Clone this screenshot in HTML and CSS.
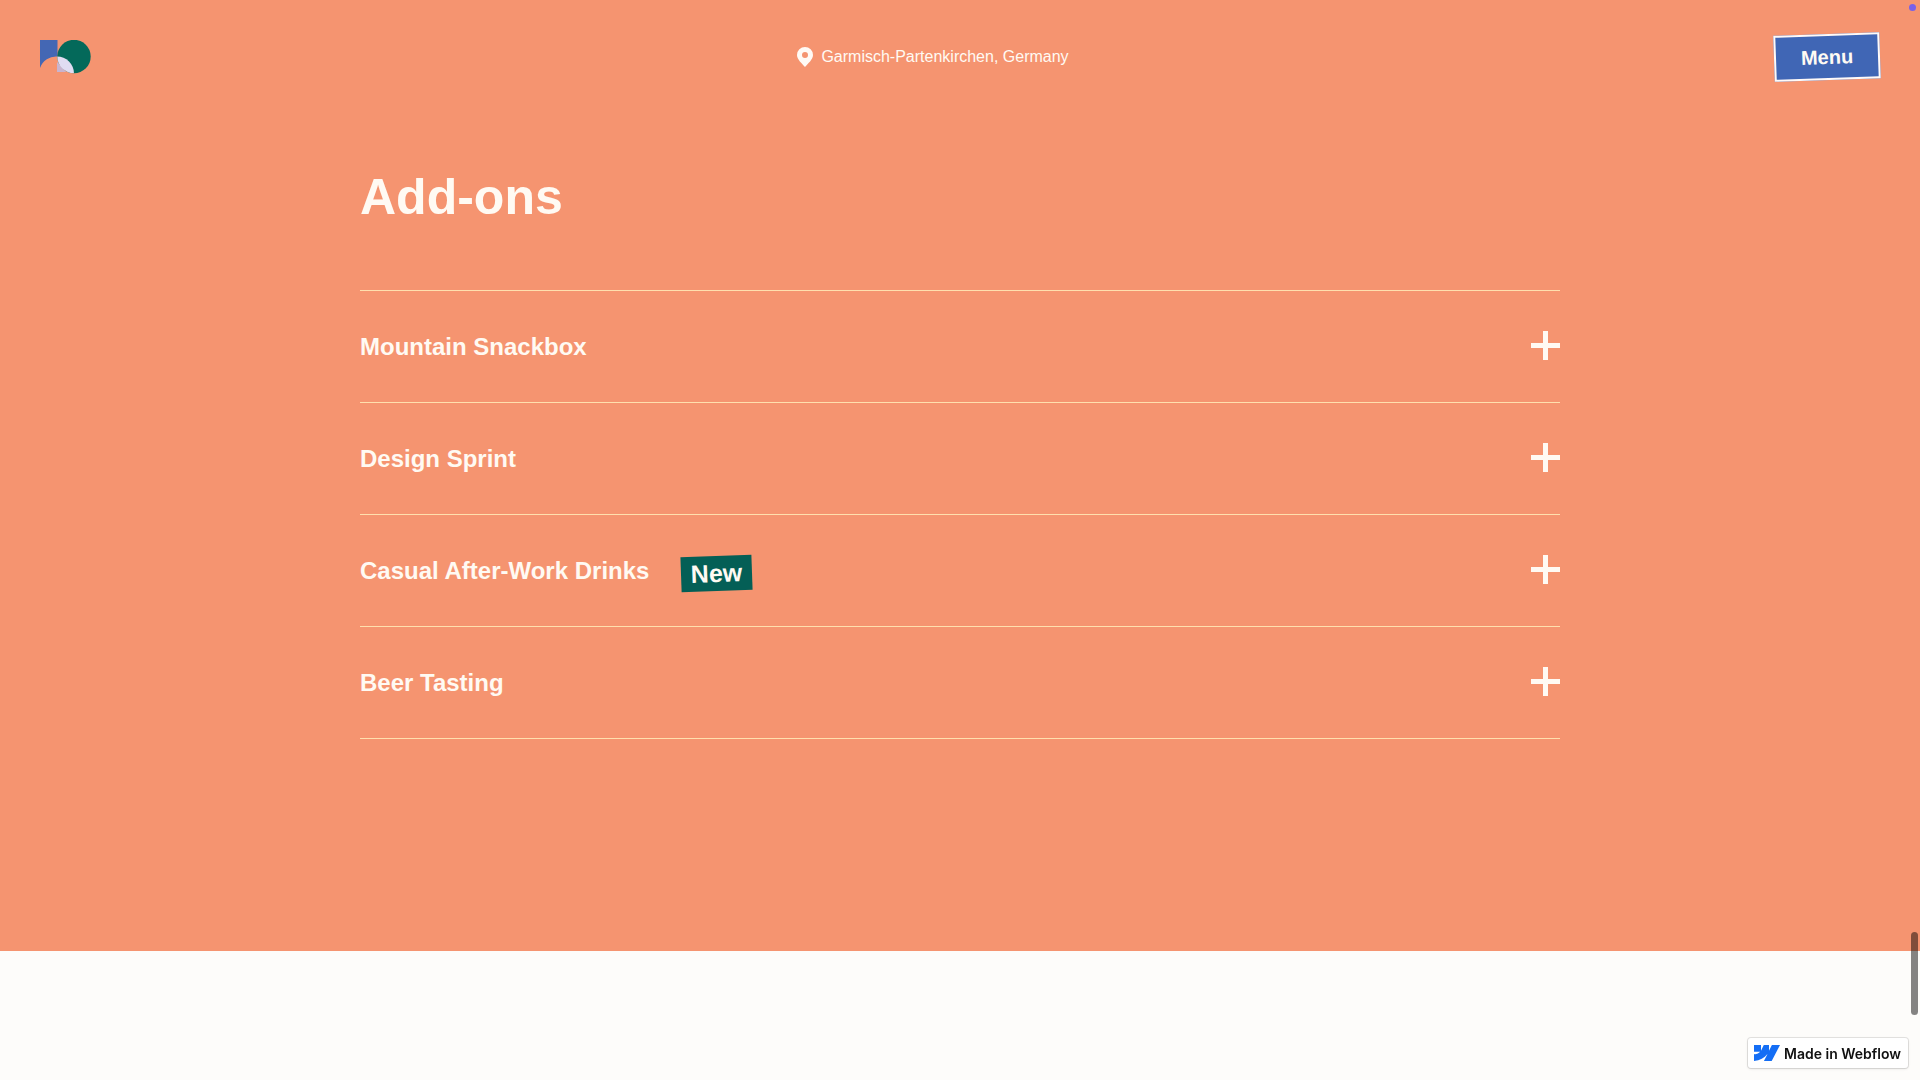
FILE: index.html
```html
<!DOCTYPE html>
<html lang="en">
<head>
  <meta charset="utf-8">
  <meta name="viewport" content="width=device-width, initial-scale=1">
  <title>Add-ons</title>
  <link rel="stylesheet" href="styles.css">
</head>
<body>
  <div class="page">
    <div class="coral">
      <header class="header">
        <a class="logo" href="#" aria-label="Home">
          <svg width="52" height="34" viewBox="0 0 52 34">
            <defs><clipPath id="circle"><circle cx="34" cy="16.5" r="16.7"/></clipPath></defs>
            <path fill="#4467b4" d="M0 0H17.500V16.500A17 17 0 0 0 0 28Z"/>
            <circle cx="34" cy="16.500" r="16.700" fill="#04695a"/>
            <path fill="#c9b4cf" d="M17 22 26 32H17Z"/>
            <path clip-path="url(#circle)" fill="#e1dcf2" d="M17 16.500A17 17 0 0 1 34 33.500H17Z"/>
          </svg>
        </a>
        <p class="location">
          <svg width="16" height="20" viewBox="0 0 16 20"><path fill="#fffaf5" fill-rule="evenodd" d="M8 0a8 8 0 0 1 8 8c0 4.500-5 8.500-8 12C5 16.500 0 12.500 0 8a8 8 0 0 1 8-8Zm0 5a3 3 0 1 0 0 6 3 3 0 0 0 0-6Z"/></svg>
          <span>Garmisch-Partenkirchen, Germany</span>
        </p>
        <button class="menu" type="button">Menu</button>
      </header>
      <main class="addons">
        <h1 class="title">Add-ons</h1>
        <ul class="list">
          <li class="item"><button class="toggle" type="button" aria-expanded="false"><span>Mountain Snackbox</span><span class="plus"></span></button></li>
          <li class="item"><button class="toggle" type="button" aria-expanded="false"><span>Design Sprint</span><span class="plus"></span></button></li>
          <li class="item"><button class="toggle" type="button" aria-expanded="false"><span>Casual After-Work Drinks</span><span class="new">New</span><span class="plus"></span></button></li>
          <li class="item"><button class="toggle" type="button" aria-expanded="false"><span>Beer Tasting</span><span class="plus"></span></button></li>
        </ul>
      </main>
    </div>
  </div>
  <span class="dot"></span>
  <span class="scroll-thumb"></span>
  <a class="webflow" href="#">
    <svg width="26" height="16" viewBox="0 0 26 16"><path fill="#146ef5" d="M26 0 17.700 16H9.900L13.400 9.300H13.200C10.400 13 6.100 15.400 0 16V9.400S3.900 9.200 6.200 6.800H0V0H7V5.700L9.800 0H15V5.700L17.900 0Z"/></svg>
    <span>Made in Webflow</span>
  </a>
</body>
</html>
```
FILE: styles.css
```css
* {
  box-sizing: border-box;
}

body {
  margin: 0;
  background: #fdfcfa;
  color: #fffaf3;
  font-family: "Liberation Sans", Arial, sans-serif;
}

button {
  font-family: inherit;
  color: inherit;
  cursor: pointer;
}

.page {
  min-height: 100vh;
}

.coral {
  background: #f59470;
  padding-bottom: 212px;
}

.header {
  display: grid;
  grid-template-columns: 1fr auto 1fr;
  align-items: center;
  height: 114px;
  padding: 0 40px;
}

.logo svg,
.location svg {
  display: block;
}

.logo {
  justify-self: start;
}

.location {
  display: flex;
  align-items: center;
  gap: 8px;
  margin: 0;
  padding-right: 54px;
  font-size: 16px;
  line-height: 20px;
}

.menu {
  justify-self: end;
  width: 106px;
  height: 46px;
  padding: 0;
  border: 2px solid #fffaf8;
  background: #4066b5;
  font-size: 20px;
  font-weight: 700;
  transform: rotate(-2deg);
}

.addons {
  width: 1200px;
  max-width: calc(100% - 80px);
  margin: 0 auto;
  padding-top: 53px;
}

.title {
  margin: 0 0 63px;
  font-size: 50px;
  line-height: 60px;
}

.list {
  margin: 0;
  padding: 0;
  list-style: none;
  border-top: 1px solid #ffdfae;
}

.item {
  border-bottom: 1px solid #ffdfae;
}

.toggle {
  display: flex;
  align-items: center;
  gap: 32px;
  width: 100%;
  height: 111px;
  padding: 0;
  border: 0;
  background: none;
  font-size: 24px;
  font-weight: 700;
  line-height: 32px;
  text-align: left;
}

.new {
  width: 71px;
  margin-top: 5px;
  background: #045f56;
  font-size: 25px;
  line-height: 35px;
  text-align: center;
  transform: rotate(-2deg);
}

.plus {
  width: 29px;
  height: 29px;
  margin: 0 0 2px auto;
  background:
    linear-gradient(#fffaf3, #fffaf3) center / 29px 5px no-repeat,
    linear-gradient(#fffaf3, #fffaf3) center / 5px 29px no-repeat;
}

.dot {
  position: fixed;
  top: 4px;
  right: 4px;
  width: 7px;
  height: 7px;
  border-radius: 50%;
  background: #7960e8;
}

.scroll-thumb {
  position: fixed;
  top: 932px;
  right: 2px;
  width: 7px;
  height: 83px;
  border-radius: 4px;
  background: rgba(0, 0, 0, 0.48);
}

.webflow {
  position: fixed;
  right: 12px;
  bottom: 12px;
  display: flex;
  align-items: center;
  gap: 4px;
  height: 30px;
  padding: 0 7px 0 6px;
  border-radius: 3px;
  background: #fff;
  box-shadow: 0 0 0 1px rgba(0, 0, 0, 0.1), 0 1px 3px rgba(0, 0, 0, 0.1);
  color: #111;
  font-family: Inter, sans-serif;
  font-size: 14px;
  font-weight: 600;
  text-decoration: none;
}
```
